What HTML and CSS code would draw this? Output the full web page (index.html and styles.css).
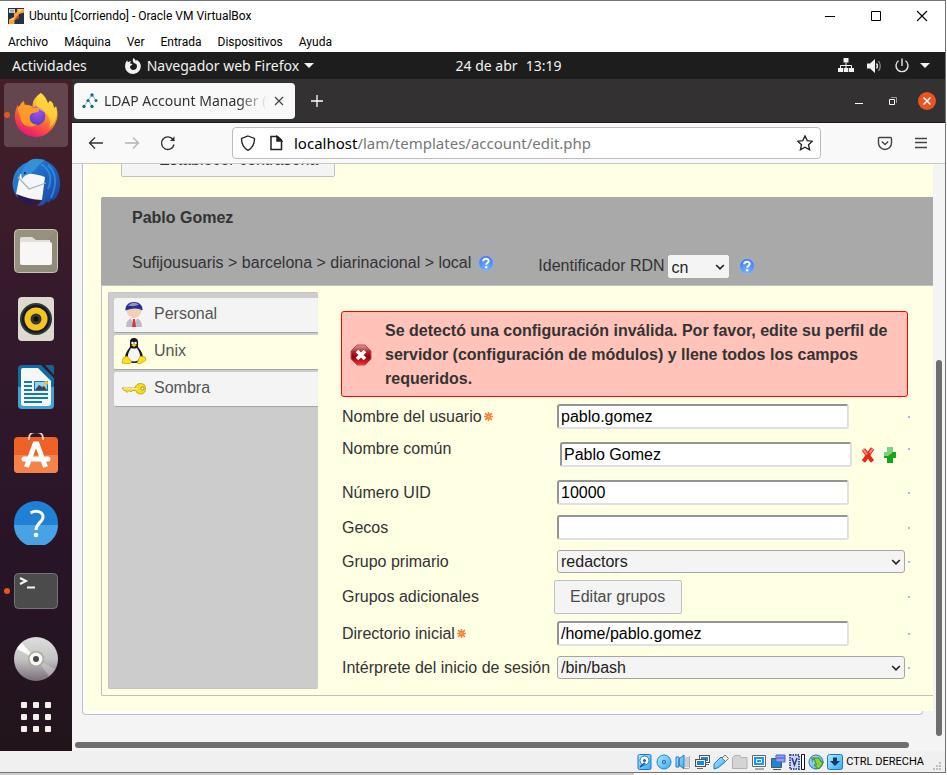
FILE: index.html
```html
<!DOCTYPE html>
<html lang="es">
<head>
<meta charset="utf-8">
<title>Ubuntu [Corriendo] - Oracle VM VirtualBox</title>
<link rel="stylesheet" href="styles.css">
</head>
<body>
<svg class="defs" aria-hidden="true">
  <defs>
    <linearGradient id="ffFlame" x1=".8" y1="0" x2=".3" y2="1"><stop offset="0" stop-color="#fff44f"/><stop offset=".35" stop-color="#ffb02e"/><stop offset=".65" stop-color="#ff5a36"/><stop offset="1" stop-color="#e5127d"/></linearGradient>
    <radialGradient id="ffGlobe" cx=".6" cy=".3" r=".8"><stop offset="0" stop-color="#a44cf5"/><stop offset="1" stop-color="#4a3fb0"/></radialGradient>
    <linearGradient id="tbBlue" x1="0" y1="0" x2="1" y2="1"><stop offset="0" stop-color="#2a90dd"/><stop offset=".5" stop-color="#1e66c2"/><stop offset="1" stop-color="#1c3f9a"/></linearGradient>
    <linearGradient id="discGrey" x1="0" y1="0" x2="0" y2="1"><stop offset="0" stop-color="#dedede"/><stop offset=".5" stop-color="#c4c4c4"/><stop offset="1" stop-color="#786e78"/></linearGradient>
    <linearGradient id="vbBlue" x1="0" y1="0" x2="1" y2="1"><stop offset="0" stop-color="#b4ecff"/><stop offset="1" stop-color="#37a8f0"/></linearGradient>
    <radialGradient id="helpBlue" cx=".5" cy=".8" r=".8"><stop offset="0" stop-color="#6cb4ff"/><stop offset="1" stop-color="#3f74ee"/></radialGradient>
    <linearGradient id="errRed" x1="0" y1="0" x2="0" y2="1"><stop offset="0" stop-color="#e0a0a0"/><stop offset=".35" stop-color="#b02028"/><stop offset=".6" stop-color="#8c0010"/><stop offset="1" stop-color="#ff3030"/></linearGradient>
    <symbol id="help" viewBox="0 0 16 16"><circle cx="8" cy="8" r="7.400" fill="url(#helpBlue)" stroke="#8fb8f8" stroke-width=".8"/><path d="M5.200 6.200C5.200 2.800 10.900 3 10.700 6c-.1 1.700-2.500 1.900-2.500 3.800" fill="none" stroke="#fff" stroke-width="2"/><circle cx="8.200" cy="12.200" r="1.200" fill="#fff"/></symbol>
    <symbol id="chevron" viewBox="0 0 10 10"><path d="M1.200 3 5 6.800 8.800 3" fill="none" stroke="#222" stroke-width="1.600"/></symbol>
    <symbol id="star" viewBox="0 0 8 8"><path d="M4 0v8M0 4h8M1 1l6 6M7 1 1 7" stroke="#ee8238" stroke-width="1.400"/><circle cx="4" cy="4" r="1" fill="#ffb070"/></symbol>
  </defs>
</svg>
<div class="window">
  <header class="titlebar">
    <svg class="i16" viewBox="0 0 16 16"><path fill="#26303f" d="M0 0h16v16H0z"/><path fill="#ddd" d="M1 1h6v4H1z"/><path d="M2 2.500h4M2 4h4" stroke="#8a98a8"/><path fill="#f7a43c" d="M9 1h7v3.500l-5 1.500v4L6.500 12v4H1v-4.500L6 9V5.500L9 4z"/><path fill="#ffd48a" d="M10 1h6l-5 3zM1 12l5-2.500v2z"/><path fill="#b8551c" d="M11 6v4l-4.500 2L8 9.500z"/></svg>
    <span class="title">Ubuntu [Corriendo] - Oracle VM VirtualBox</span>
    <button class="winbtn" aria-label="Minimizar"><svg class="i12" viewBox="0 0 12 12"><path d="M1 6.500h10" stroke="#000"/></svg></button>
    <button class="winbtn" aria-label="Maximizar"><svg class="i12" viewBox="0 0 12 12"><path d="M1.500 1.500h9v9h-9z" fill="none" stroke="#000"/></svg></button>
    <button class="winbtn" aria-label="Cerrar"><svg class="i12" viewBox="0 0 12 12"><path d="m1 1 10 10M11 1 1 11" stroke="#000" stroke-width="1.100"/></svg></button>
  </header>
  <nav class="menubar"><a href="#">Archivo</a><a href="#">Máquina</a><a href="#">Ver</a><a href="#">Entrada</a><a href="#">Dispositivos</a><a href="#">Ayuda</a></nav>

  <div class="topbar">
    <div class="top-left">
      <span class="activities">Actividades</span>
      <svg class="i16" viewBox="0 0 16 16"><path fill="#f2f2f2" d="M8.500 0C10 1 10.500 2 10.800 3c.6-.4.8-.8.9-1.300C14.500 3.400 16 6 15.800 8.600 15.500 12.800 12.200 16 8 16S.2 12.800.1 8.500C0 5.500 1 3.500 2.400 2.200c0 1 .2 1.500.6 2C4 3.300 5.200 3 6.400 3.300 5.500 4 5 4.700 5 5.500l2.500.4C7 7 5.500 7 5 8.500 5 10.500 6.400 12 8.200 12c2.200 0 3.800-1.700 3.800-3.800C12 6 10.500 5.500 9 5 7.500 4 7.500 1.500 8.500 0z"/></svg>
      <span class="app">Navegador web Firefox</span>
      <svg class="caret" viewBox="0 0 10 6"><path d="M0 0h10L5 5z" fill="#f2f2f2"/></svg>
    </div>
    <div class="clock"><span>24 de abr</span><span>13:19</span></div>
    <div class="tray">
      <svg class="i16" viewBox="0 0 16 16" fill="#f2f2f2"><path d="M5.500 0h5v4.500h-5zM0 10h5v4H0zM5.700 10h4.600v4H5.700zM11 10h5v4h-5z"/><path d="M8 4.500V10M2.500 10V7.500h11V10" fill="none" stroke="#f2f2f2"/></svg>
      <svg class="i16" viewBox="0 0 16 16"><path d="M1 5.500h3L9 1v14l-5-4.500H1z" fill="#f2f2f2"/><path d="M10.500 5.500q2 2.500 0 5" fill="none" stroke="#f2f2f2" stroke-width="1.300"/><path d="M12.500 3q3.500 5 0 10" fill="none" stroke="#888" stroke-width="1.300"/></svg>
      <svg class="i16" viewBox="0 0 16 16" fill="none" stroke="#e6e6e6" stroke-width="1.400"><path d="M4.500 2.800a6 6 0 1 0 7 0M8 .5V8"/></svg>
      <svg class="caret" viewBox="0 0 10 6"><path d="M0 0h10L5 5z" fill="#f2f2f2"/></svg>
    </div>
  </div>

  <div class="desktop">
    <aside class="dock">
      <div class="app-slot active"><i class="run"></i><svg class="i48" viewBox="0 0 48 48"><path fill="url(#ffFlame)" d="M29 1c4 3 6.500 7 7.500 11l2-3c3.500 2 4 5 4 8l2.500-2c2 6 2 11 0 16-3.500 9.500-12 16-21 16C12 47 3 38.500 2 27.500c-.5-6 1-10.500 3-14l1 3c1-3 3-5.500 5-7l.5 4c3-.5 6 0 9 1.500C20 9 24 4.500 29 1z"/><path fill="#ff9a2c" d="M5 16c3-1 5-6.500 6.500-6l1 4 7 1.500 8 4.500c-2 1-6 1-8 4-2-1-5-1-6 3-4 0-8-5-8.500-11z"/><circle cx="24" cy="25" r="9.800" fill="url(#ffGlobe)"/><path fill="#ff9a26" d="M5 19c2-3 6-5 10-4 3 1 6 1.500 9 1 3 1 4 2.500 3 4-3 2-7 .5-9 4-2 5 1 10 7 10-6 4-13 2-16-3-2-5-2-8-4-12z"/><path d="M29 1c4 3 6.500 7 7.500 11l2-3c3.500 2 4 5 4 8l2.500-2c2 10-1 17-7 23 2-10-1-16-9-19-6-3-6-10 0-18z" fill="#ffd83c" opacity=".72"/></svg></div>
      <div class="app-slot"><svg class="i50" viewBox="0 0 50 50"><path fill="url(#tbBlue)" d="M17 4c4-4 13-4 20 0 9 5 12 13 12 22 0 8-3 14-8 17l1-3-5 5-1-2-4 4-6 1c3-3 5-6 5-9L8 31l-1 9C2 34 0 26 3 18 5 11 11 6 17 4z"/><path fill="#2a1850" d="M5 35c4-2 9 1 16 4l5 6-3 2C15 47 8 43 5 35z"/><path fill="#f4f6f8" d="M9 16q12-2 25 3l-3 23C23 42 13 39 5 36z"/><path d="m7 19 11 12 17-6" fill="none" stroke="#a8afb8" stroke-width="1.200"/><path fill="#3590d8" d="M17 4c5-5 11-3 17-2-6 3-7 7-11 11-5 4-9 3-12 8-2-7 1-11 6-17z"/><path d="M30 6c9 6 12 14 7 25M37 7c9 9 9 19 3 33" stroke="#3ba1e9" stroke-width="2" fill="none" opacity=".6"/><circle cx="14" cy="15" r="1" fill="#123"/></svg></div>
      <div class="app-slot"><svg class="i44" viewBox="0 0 44 44"><rect x=".5" y=".5" width="43" height="43" rx="4" fill="#979280" stroke="#c9c5b4"/><path d="M1 43 43 1v38q0 4-4 4z" fill="#8a8573" opacity=".5"/><path fill="#e3e0d8" d="M6 10q0-2 2-2h10l4 3h14v8H6z"/><rect x="6" y="13" width="32" height="23" rx="2" fill="#f8f7f5"/></svg></div>
      <div class="app-slot"><svg class="i44" viewBox="0 0 44 44"><rect x="4" y="0" width="36" height="44" rx="4" fill="#dedad0"/><circle cx="22" cy="22" r="16" fill="#30363c"/><circle cx="22" cy="22" r="14" fill="#161b22"/><circle cx="22" cy="22" r="11.500" fill="#f6c51c"/><circle cx="22" cy="22" r="5.500" fill="#33363a"/><circle cx="22" cy="22" r="2.500" fill="#0d1115"/></svg></div>
      <div class="app-slot"><svg class="i44" viewBox="0 0 44 44"><path fill="#106da3" d="M8 0h19l13 13v27q0 4-4 4H8q-4 0-4-4V4q0-4 4-4z"/><path fill="#43a2d2" d="M4 22h36v18q0 4-4 4H8q-4 0-4-4z"/><path fill="#f5f6f6" d="M9 3h15l13 13v22q0 3-3 3H10q-3 0-3-3V5q0-2 2-2z"/><path fill="#19638f" d="M31 0h7q2 0 2 2v8z"/><path d="M10 17h8M10 21h8M10 25h8M10 29h24M10 33h24M10 37h18" stroke="#147ab4" stroke-width="2"/><path fill="#147ab4" d="M20 16h14v10H20z"/><path fill="#8dd5f5" d="M21 17h12v8H21z"/><path fill="#444" d="m21 25 4-5 3 2 2-1 3 4z"/><circle cx="32" cy="18" r="2" fill="#fbc02d"/></svg></div>
      <div class="app-slot"><svg class="i44" viewBox="0 0 44 44"><rect x="0" y="4" width="44" height="36" rx="4" fill="#ef6126"/><path fill="#f58248" d="M0 22h44v14q0 4-4 4H4q-4 0-4-4z"/><path d="M15 7V5c0-8 14-8 14 0v2" fill="none" stroke="#f8d5ab" stroke-width="2"/><path d="M12.500 34 21 11h2l8.500 23" fill="none" stroke="#fff" stroke-width="5"/><path d="M10 26h24" stroke="#fff" stroke-width="5" stroke-linecap="round"/></svg></div>
      <div class="app-slot"><svg class="i44" viewBox="0 0 44 44"><circle cx="22" cy="22" r="22" fill="#2080d4"/><path d="M0 24a22 22 0 0 0 44 0z" fill="#48a2e4"/><path d="M16.500 12c5-3 12.500-2 12.500 4 0 5-7 6-7 13" fill="none" stroke="#fff" stroke-width="3"/><circle cx="22" cy="34" r="2.300" fill="#fff"/></svg></div>
      <div class="app-slot"><i class="run"></i><svg class="i44" viewBox="0 0 44 44"><rect x=".5" y="4.500" width="43" height="35" rx="4" fill="#4b4b4b" stroke="#747474"/><path d="m6 9 6 3-6 3" fill="none" stroke="#f5f5f5" stroke-width="2"/><path d="M13 18.500h8" stroke="#f5f5f5" stroke-width="2"/></svg></div>
      <div class="app-slot"><svg class="i44" viewBox="0 0 44 44"><circle cx="22" cy="22" r="22" fill="url(#discGrey)"/><path d="M22 22 3 12Q5 8 8 6z" fill="#fff" opacity=".9"/><path d="m22 22 19 10q-3 5-6 7z" fill="#ddd" opacity=".4"/><circle cx="22" cy="22" r="8" fill="#aca699"/><circle cx="22" cy="22" r="6.500" fill="#f7f7f5"/><circle cx="22" cy="22" r="3" fill="#4a4a4a"/></svg></div>
      <div class="apps"><svg class="i30" viewBox="0 0 30 30" fill="#f2efeb"><rect width="6" height="6" rx="1"/><rect x="12" width="6" height="6" rx="1"/><rect x="24" width="6" height="6" rx="1"/><rect y="12" width="6" height="6" rx="1"/><rect x="12" y="12" width="6" height="6" rx="1"/><rect x="24" y="12" width="6" height="6" rx="1"/><rect y="24" width="6" height="6" rx="1"/><rect x="12" y="24" width="6" height="6" rx="1"/><rect x="24" y="24" width="6" height="6" rx="1"/></svg></div>
    </aside>

    <section class="browser">
      <div class="tabstrip">
        <div class="tab">
          <svg class="i16" viewBox="0 0 16 16"><path d="M10 2 6 7 2 13.500M6 7l4 6M10 2l4 5.500" fill="none" stroke="#7dbccb"/><g fill="#14707f"><circle cx="10" cy="2" r="1.700"/><circle cx="6" cy="7.500" r="1.600"/><circle cx="14" cy="7.500" r="1.500"/><circle cx="2" cy="13.500" r="1.700"/><circle cx="10" cy="13.500" r="1.700"/></g></svg>
          <span class="tab-title">LDAP Account Manager (l</span>
          <button class="bare" aria-label="Cerrar pestaña"><svg class="i10" viewBox="0 0 10 10"><path d="m1 1 8 8M9 1 1 9" stroke="#444" stroke-width="1.200"/></svg></button>
        </div>
        <button class="bare newtab" aria-label="Nueva pestaña"><svg class="i12" viewBox="0 0 12 12"><path d="M6 0v12M0 6h12" stroke="#fff" stroke-width="1.300"/></svg></button>
        <button class="bare ctl" aria-label="Minimizar"><svg class="i10" viewBox="0 0 10 10"><path d="M1 7.500h8" stroke="#fff"/></svg></button>
        <button class="bare ctl" aria-label="Restaurar"><svg class="i10" viewBox="0 0 10 10"><path d="M1.500 3.500h5v5h-5z" fill="none" stroke="#fff"/><path d="M3 1.500h5.500V7" fill="none" stroke="#999"/></svg></button>
        <button class="bare ctl" aria-label="Cerrar"><svg class="i18" viewBox="0 0 18 18"><circle cx="9" cy="9" r="9" fill="#e95420"/><path d="m5.500 5.500 7 7M12.500 5.500l-7 7" stroke="#fff" stroke-width="1.500"/></svg></button>
      </div>
      <div class="toolbar">
        <button class="bare tool" aria-label="Atrás"><svg class="i16" viewBox="0 0 16 16" fill="none" stroke="#333" stroke-width="1.300"><path d="M15 8H1.500M7 2.500 1.500 8 7 13.500"/></svg></button>
        <button class="bare tool" aria-label="Adelante"><svg class="i16" viewBox="0 0 16 16" fill="none" stroke="#b4b4b4" stroke-width="1.300"><path d="M1 8h13.500M9 2.500 14.500 8 9 13.500"/></svg></button>
        <button class="bare tool" aria-label="Recargar"><svg class="i16" viewBox="0 0 16 16" fill="none" stroke="#333" stroke-width="1.400"><path d="M14 9.500A6.300 6.300 0 1 1 13 4.500l1 1.500"/><path d="M10 6h4.500V1.300z" fill="#333" stroke="none"/></svg></button>
        <div class="urlbar">
          <svg class="i16 shield" viewBox="0 0 16 16" fill="none" stroke="#222" stroke-width="1.300"><path d="M8 1 14.500 3.500C14.500 9 12.500 13 8 15.300 3.500 13 1.500 9 1.500 3.500z"/></svg>
          <svg class="i16" viewBox="0 0 16 16" fill="none" stroke="#222" stroke-width="1.500"><path d="M3 1.500h6.500L13.500 5v9.500H3z"/><path d="M9 1.500v4.500h4.500z" fill="#222"/></svg>
          <div class="address" role="textbox" aria-label="Dirección"><b>localhost</b>/lam/templates/account/edit.php</div>
          <button class="bare" aria-label="Marcar"><svg class="i16" viewBox="0 0 16 16" fill="none" stroke="#222" stroke-width="1.300"><path d="m8 .9 2.200 4.700 5.100.6-3.800 3.500 1.100 5.100L8 12.300l-4.600 2.500 1.100-5.100L.7 6.200l5.100-.6z"/></svg></button>
        </div>
        <div class="tool-right">
          <button class="bare tool" aria-label="Pocket"><svg class="i16" viewBox="0 0 16 16" fill="none" stroke="#444" stroke-width="1.400"><path d="M2.500 2.500h11q1 0 1 1V8a6.500 6.500 0 0 1-13 0V3.500q0-1 1-1z"/><path d="M4.800 6.500 8 9.500l3.200-3"/></svg></button>
          <button class="bare tool" aria-label="Menú"><svg class="i16" viewBox="0 0 16 16" stroke="#444" stroke-width="1.300"><path d="M2 3.500h12M2 7.500h12M2 12.500h12"/></svg></button>
        </div>
      </div>

      <div class="view">
        <main class="page">
          <div class="panel"><div class="cream">
            <button class="btn password">Establecer contraseña</button>
            <div class="account">
              <div class="account-head">
                <h1>Pablo Gomez</h1>
                <div class="ident">
                  <div class="suffix"><span>Sufijousuaris &gt; barcelona &gt; diarinacional &gt; local</span><svg class="i16" role="img" aria-label="Ayuda"><use href="#help"/></svg></div>
                  <div class="rdn"><label for="rdn">Identificador RDN</label><span class="select"><select id="rdn"><option>cn</option></select><svg class="chev"><use href="#chevron"/></svg></span><svg class="i16" role="img" aria-label="Ayuda"><use href="#help"/></svg></div>
                </div>
              </div>
              <div class="account-body">
                <nav class="modules">
                  <a href="#"><svg class="i26" viewBox="0 0 26 26"><path d="M5 26q0-9 8-9t8 9z" fill="#bdbccd"/><path d="m10 17 3 8 3-8z" fill="#fff"/><path d="m12 18-1 8h4l-1-8z" fill="#d8353d"/><circle cx="13" cy="9.500" r="7.500" fill="#f5cfb5"/><path d="M4.500 9.500C4 4 8 1 13 1s9 3 8.500 8.500q-4-2.500-8.500-2t-8.500 2z" fill="#252f92"/><path d="M7 4.500q5-5 11-1-5 3-11 1z" fill="#8c94cf"/></svg>Personal</a>
                  <a href="#" class="on"><svg class="i26" viewBox="0 0 26 26"><path d="M9 4q0-4 4-4t4 4v5q5 6 5 11-3 5-9 5t-9-5q0-5 5-11z" fill="#161616"/><path d="M10 10q3 1 6 0 4 6 3 11-6 5-12 0-1-5 3-11z" fill="#f5f5f5"/><circle cx="11.500" cy="5" r="1.300" fill="#fff"/><circle cx="14.500" cy="5" r="1.300" fill="#fff"/><path d="m10 7 3-1.500L16 7l-3 2z" fill="#f5c315"/><path d="M2 20l4-2 5 6-3 2-7-1zM24 19l-5-1-3 7 3 1 6-4z" fill="#fbe217" stroke="#b98a00" stroke-width=".6"/></svg>Unix</a>
                  <a href="#"><svg class="i26" viewBox="0 0 26 26"><path d="M1 13h13q1-4.500 5.500-4.500 5 0 5 5.200t-5 5.300q-4 0-5-3.500h-3l-1.500 1.500L8 15.500l-2 2-1.500-2H3z" fill="#f5dc1e" stroke="#b89818" stroke-width=".8"/><path d="M2.500 13.800h14" stroke="#fff9b0"/><circle cx="21.500" cy="13.500" r="1.500" fill="#fff" stroke="#a78910"/></svg>Sombra</a>
                </nav>
                <form class="form">
                  <div class="error" role="alert">
                    <svg class="i22" viewBox="0 0 22 22"><path d="M7 1h8l6 6v8l-6 6H7l-6-6V7z" fill="url(#errRed)" stroke="#c84a4a"/><path d="m7 7 8 8M15 7l-8 8" stroke="#fff" stroke-width="3.800"/></svg>
                    <p>Se detectó una configuración inválida. Por favor, edite su perfil de servidor (configuración de módulos) y llene todos los campos requeridos.</p>
                  </div>
                  <div class="row"><label for="user">Nombre del usuario<svg class="req"><use href="#star"/></svg></label><input id="user" type="text" value="pablo.gomez"><i class="dot"></i></div>
                  <div class="row multi"><label for="cn">Nombre común</label><div class="values"><input id="cn" type="text" value="Pablo Gomez"><button type="button" class="bare" aria-label="Eliminar"><svg class="i16" viewBox="0 0 16 16"><path d="m3.500 2.500 9 12M12.500 1.500l-9 13" stroke="#e8261a" stroke-width="4"/><path d="m3 2 4 5.500M12.500 2 9.500 6" stroke="#f7907c" stroke-width="2"/></svg></button><button type="button" class="bare" aria-label="Añadir"><svg class="i16" viewBox="0 0 16 16"><path d="M5 0h6v5h3v6h-3v5H5v-5H2V5h3z" fill="#17a51b"/><path d="M5 0h6v5L6 9H2V5h3z" fill="#9fe39c" opacity=".75"/></svg></button></div><i class="dot"></i></div>
                  <div class="row"><label for="uid">Número UID</label><input id="uid" type="text" value="10000"><i class="dot"></i></div>
                  <div class="row"><label for="gecos">Gecos</label><input id="gecos" type="text"><i class="dot"></i></div>
                  <div class="row"><label for="group">Grupo primario</label><span class="select"><select id="group"><option>redactors</option></select><svg class="chev"><use href="#chevron"/></svg></span><i class="dot"></i></div>
                  <div class="row action"><label for="groups">Grupos adicionales</label><button id="groups" type="button" class="btn">Editar grupos</button><i class="dot"></i></div>
                  <div class="row"><label for="home">Directorio inicial<svg class="req"><use href="#star"/></svg></label><input id="home" type="text" value="/home/pablo.gomez"><i class="dot"></i></div>
                  <div class="row"><label for="shell">Intérprete del inicio de sesión</label><span class="select"><select id="shell"><option>/bin/bash</option></select><svg class="chev"><use href="#chevron"/></svg></span><i class="dot"></i></div>
                </form>
              </div>
            </div>
          </div></div>
        </main>
        <div class="vscroll"><i></i></div>
        <div class="hscroll"><i></i></div>
      </div>
    </section>
  </div>

  <footer class="statusbar">
    <svg class="i16" viewBox="0 0 16 16"><rect x="1" y=".5" width="13" height="15" rx="1.500" fill="url(#vbBlue)" stroke="#1c78c8"/><circle cx="7.500" cy="6.500" r="4.500" fill="#fff" stroke="#1c78c8"/><circle cx="7.500" cy="6.500" r="1.500" fill="#1c60b0"/><path d="m3 13 5-4" stroke="#1c60b0" stroke-width="2"/></svg>
    <svg class="i16" viewBox="0 0 16 16"><circle cx="8" cy="8" r="7" fill="url(#vbBlue)" stroke="#1c88d0"/><circle cx="8" cy="8" r="2" fill="#1769b5"/><circle cx="8" cy="8" r=".8" fill="#fff"/></svg>
    <svg class="i16" viewBox="0 0 16 16"><path d="M1 3h3v10H1zM4 5l5-4v14l-5-4z" fill="url(#vbBlue)" stroke="#1c78c8"/><path d="M10 4h5M10 6h5M10 8h5M10 10h5M10 12h5M9 14.500h5" stroke="#a8a8a8"/><path d="M14.500 2v12" stroke="#b0b0b0"/></svg>
    <svg class="i16" viewBox="0 0 16 16"><rect x="5.500" y="1.500" width="10" height="7" fill="#1787e0" stroke="#555"/><path d="M6.500 2.500h8v5h-8z" fill="none" stroke="#fff"/><rect x="1.500" y="5.500" width="10" height="7" fill="#1787e0" stroke="#555"/><path d="M2.500 6.500h8v5h-8z" fill="none" stroke="#fff"/><path d="M3 14.500h6M12 10.500h3" stroke="#666"/></svg>
    <svg class="i16" viewBox="0 0 16 16"><path d="M1 15v-5l7-7 4.500 4.500-7 6z" fill="url(#vbBlue)" stroke="#1c78c8"/><path d="m9 4 3-3 3.500 3.500-3 3z" fill="#eee" stroke="#777"/></svg>
    <svg class="i16" viewBox="0 0 16 16"><path d="M.5 3.500 3 1.500h5l1 2h6v11H.5z" fill="#d4d4d4" stroke="#b2b2b2"/></svg>
    <svg class="i16" viewBox="0 0 16 16"><path d="M1.500 1.500h13v11h-13zM4 15h9" fill="#fff" stroke="#666"/><path d="M3 3h10v8H3z" fill="#1999f0"/><path d="M5.500 5.500h5v3h-5z" fill="#1999f0" stroke="#fff"/></svg>
    <svg class="i16" viewBox="0 0 16 16"><path d="M1.500 4.500h10v9h-10zM3 15.500h8" fill="#1787e0" stroke="#555"/><path d="M6 1h9v7H6z" fill="#8ca2ef" stroke="#4b63c8"/><path d="M7 4h8" stroke="#4257bc"/></svg>
    <svg class="i16" viewBox="0 0 16 16"><path d="M1 1h9v14H1z" fill="#d0d6fa" stroke="#3950a8" stroke-width="2" stroke-dasharray="1.500 1"/><path d="m3 4 2.500 7L8 4" fill="none" stroke="#283c90" stroke-width="1.500"/><path d="M12.500.5h3v15h-3z" fill="#fff" stroke="#111"/></svg>
    <svg class="i16" viewBox="0 0 16 16"><circle cx="8" cy="8" r="7" fill="url(#vbBlue)" stroke="#2d6fb0"/><path d="M3 4q3-2 4 0L4 9z" fill="#5d9d65"/><path d="M6 4h5l2 4h2.500L11 15l-5-4h2.500z" fill="#83d538" stroke="#458b20"/></svg>
    <svg class="i16" viewBox="0 0 16 16"><rect x=".5" y=".5" width="15" height="15" rx="2" fill="url(#vbBlue)" stroke="#1c78c8"/><path d="M6 3.500h4V7h3l-5 5-5-5h3z" fill="#103a68"/></svg>
    <span class="hostkey">CTRL DERECHA</span>
    <svg class="grip" viewBox="0 0 9 9" fill="#bdbdbd"><path d="M6 0h2v2H6zM3 3h2v2H3zM6 3h2v2H6zM0 6h2v2H0zM3 6h2v2H3zM6 6h2v2H6z"/></svg>
  </footer>
</div>
<div class="under"></div>
</body>
</html>
```

FILE: styles.css
```css
* { box-sizing: border-box; }
body {
  margin: 0;
  min-height: 100vh;
  display: flex;
  flex-direction: column;
  background: #fff;
  font-family: "Liberation Sans", Arial, sans-serif;
  font-size: 16px;
}
svg { display: block; flex: none; }
button, input, select { font: inherit; margin: 0; }
a { text-decoration: none; color: inherit; }
.defs { position: absolute; width: 0; height: 0; }
.i10 { width: 10px; height: 10px; }
.i12 { width: 12px; height: 12px; }
.i16 { width: 16px; height: 16px; }
.i18 { width: 18px; height: 18px; }
.i22 { width: 22px; height: 22px; }
.i26 { width: 26px; height: 26px; }
.i30 { width: 30px; height: 30px; }
.i44 { width: 44px; height: 44px; }
.i48 { width: 46px; height: 46px; }
.i50 { width: 50px; height: 50px; }

.window {
  flex: 1;
  display: flex;
  flex-direction: column;
  margin-right: 1px;
  border: 1px solid #747474;
  border-left: 0;
}
.under { height: 2px; width: 67%; background: #ccc; }

/* Host window */
.titlebar {
  height: 30px;
  display: flex;
  align-items: center;
  padding-left: 8px;
  font-family: Roboto, sans-serif;
  font-size: 12px;
  color: #000;
}
.title { flex: 1; padding-left: 5px; }
.winbtn {
  width: 46px;
  height: 30px;
  padding: 0;
  border: 0;
  background: none;
  display: grid;
  place-items: center;
}
.menubar {
  height: 21px;
  display: flex;
  gap: 16px;
  padding-left: 8px;
  line-height: 22px;
  font-family: Roboto, sans-serif;
  font-size: 12px;
}

/* Guest top bar */
.topbar {
  height: 27px;
  display: grid;
  grid-template-columns: 72px 1fr auto 1fr;
  align-items: center;
  background: #1d1d1d;
  color: #f2f2f2;
  font-family: "Noto Sans", sans-serif;
  font-size: 14px;
}
.top-left { grid-column: 1 / 3; display: flex; align-items: center; padding-left: 12px; }
.activities { padding-right: 38px; }
.app { padding: 0 5px 0 6px; }
.caret { width: 10px; height: 6px; }
.clock { display: flex; gap: 8px; }
.tray { display: flex; align-items: center; justify-content: flex-end; gap: 12px; padding-right: 15px; }
.tray .caret { margin-left: -2px; }

.desktop { flex: 1; display: flex; min-height: 0; }
.dock {
  width: 72px;
  flex: none;
  padding-top: 2px;
  background: linear-gradient(#431f28, #33192c 38%, #281427 72%, #21151b);
}
.app-slot { position: relative; height: 68px; display: grid; place-items: center; }
.app-slot.active::before {
  content: "";
  position: absolute;
  inset: 2px 4px;
  border-radius: 4px;
  background: #ffffff2e;
}
.app-slot svg { position: relative; }
.run {
  position: absolute;
  left: 4px;
  top: 31px;
  width: 6px;
  height: 6px;
  border-radius: 50%;
  background: #e95420;
}
.apps { display: grid; place-items: center; padding-top: 9px; }

/* Browser */
.browser { flex: 1; min-width: 0; display: flex; flex-direction: column; }
.bare { padding: 0; border: 0; background: none; display: grid; place-items: center; }
.tabstrip {
  height: 44px;
  display: flex;
  align-items: center;
  padding: 0 9px 0 2px;
  background: #333132;
  border-bottom: 1px solid #1c1a1b;
  font-family: "Noto Sans", sans-serif;
  font-size: 14px;
}
.tab {
  width: 221px;
  height: 36px;
  display: flex;
  align-items: center;
  gap: 6px;
  padding: 0 11px 0 8px;
  border-radius: 4px;
  background: #f9f9fa;
  color: #333;
}
.tab-title {
  flex: 1;
  min-width: 0;
  white-space: nowrap;
  mask-image: linear-gradient(to right, #000 82%, transparent);
}
.newtab { margin: 0 auto 0 16px; }
.ctl { width: 18px; height: 18px; margin-left: 16px; }
.toolbar {
  height: 41px;
  display: flex;
  align-items: center;
  padding: 0 6px;
  background: #f9f9fa;
  border-bottom: 1px solid #c8c8c8;
}
.tool { width: 36px; height: 32px; }
.urlbar {
  flex: 1;
  height: 32px;
  display: flex;
  align-items: center;
  gap: 10px;
  margin: 0 46px;
  padding: 0 7px;
  border: 1px solid #bdbdbd;
  border-radius: 4px;
  background: #fff;
  color: #777;
  font-family: "Noto Sans", sans-serif;
  font-size: 15px;
}
.shield { margin-right: 2px; }
.address { flex: 1; min-width: 0; white-space: nowrap; overflow: hidden; }
.address b { font-weight: 400; color: #000; }
.tool-right { display: flex; }

.view {
  flex: 1;
  min-height: 0;
  display: grid;
  grid-template-columns: minmax(0, 1fr) 12px;
  grid-template-rows: minmax(0, 1fr) 12px;
  background: #f4f4f4;
}
.page { overflow: hidden; }
.vscroll { grid-column: 2; grid-row: 1; display: flex; align-items: flex-end; justify-content: center; padding-bottom: 3px; }
.vscroll i { width: 6px; height: calc(66% - 2px); border-radius: 3px; background: #6e6e6e; }
.hscroll { display: flex; align-items: center; padding: 0 24px 0 3px; }
.hscroll i { width: 100%; height: 6px; border-radius: 3px; background: #6e6e6e; }

/* Account page, scrolled so that its first button is cut by the toolbar */
.panel {
  margin: -21px 10px 0;
  padding: 0 0 3px 3px;
  border: 1px solid #c0c0c0;
  border-top: 0;
  border-radius: 0 0 4px 4px;
  background: #fff;
}
.cream { margin-right: -11px; padding: 0 0 15px 15px; background: #ffffe3; }
.btn {
  height: 34px;
  padding: 0 16px 0 15px;
  border: 1px solid #c0c0c4;
  border-radius: 2px;
  background: #f4f4f4;
  color: #4a4a4a;
  white-space: nowrap;
}
.password { display: block; width: 214px; margin: 0 0 20px 20px; padding-left: 37px; text-align: left; color: #333; }
.account { border: solid #bfbfbf; border-width: 0 0 1px 1px; border-radius: 2px 0 0 2px; }
.account-head {
  margin-left: -1px;
  padding: 9px 0 0 31px;
  height: 89px;
  border-radius: 2px 0 0 0;
  border-bottom: 1px solid #bfbfbf;
  background: #a9a9a9;
  color: #333;
}
h1 { margin: 0; font-size: 16px; line-height: 24px; }
.ident { display: flex; align-items: flex-start; gap: 44px; padding-top: 21px; line-height: 24px; }
.suffix, .rdn { display: flex; align-items: center; white-space: nowrap; }
.suffix { gap: 7px; }
.rdn { padding-top: 3px; }

.account-body { display: flex; padding: 6px 0 6px 6px; }
.modules {
  width: 210px;
  flex: none;
  display: flex;
  flex-direction: column;
  gap: 2px;
  padding: 5px 0 0 5px;
  border: 1px solid #c3c3c3;
  border-right: 0;
  border-radius: 2px;
  background: #ccc;
}
.modules a {
  height: 35px;
  display: flex;
  align-items: center;
  gap: 7px;
  padding: 0 0 2px 7px;
  border-bottom: 1px solid #a5a5a5;
  border-radius: 2px 0 0 2px;
  background: #f4f4f4;
  color: #555;
}
.modules .on { background: #ffffe3; }
.form { flex: 1; min-width: 0; margin: 0; padding: 19px 23px 5px 23px; color: #333; }
.error {
  display: flex;
  align-items: center;
  gap: 13px;
  margin: 0 2px 2px 0;
  padding: 7px 8px 5px;
  border: 1px solid #f00;
  border-radius: 3px;
  background: #ffc3b9;
  font-weight: 700;
  line-height: 24px;
}
.error p { margin: 0; }
.row {
  display: grid;
  grid-template-columns: 215px minmax(0, 1fr) 2px;
  column-gap: 3px;
  align-items: center;
  padding: 5px 0;
}
.row label { display: flex; align-items: center; gap: 2px; white-space: nowrap; margin-right: -3px; padding-left: 1px; }
.req { width: 9px; height: 9px; }
.row input {
  width: 292px;
  height: 25px;
  margin-left: -2px;
  padding: 0 2px;
  border: 2px solid #e0e0e4;
  border-top-color: #949494;
  border-left-color: #949494;
  border-radius: 3px;
  background: #fff;
  color: #000;
}
.dot { width: 2px; height: 2px; background: #9dbdec; }
.multi { padding: 3px 0 8px; align-items: start; line-height: 24px; }
.multi .dot { margin-top: 11px; }
.values { display: flex; align-items: center; gap: 6px; padding: 5px 0 0 3px; }
.values input { margin-right: 2px; }
.action { padding: 2px 0; }
.action .btn { justify-self: start; margin-left: -5px; }
.select { position: relative; display: block; margin-left: -2px; }
.rdn .select { width: 61px; margin: 0 10px 0 3px; }
.select select {
  display: block;
  appearance: none;
  width: 100%;
  height: 23px;
  padding: 0 20px 0 3px;
  border: 1px solid #a5a5a8;
  border-radius: 3px;
  background: #f4f4f4;
  color: #222;
}
.rdn select { border-color: #f4f4f4; border-radius: 2px; }
.chev { position: absolute; right: 4px; top: 7px; width: 10px; height: 10px; pointer-events: none; }

/* Host status bar */
.statusbar {
  height: 21px;
  display: flex;
  align-items: center;
  justify-content: flex-end;
  gap: 3px;
  padding-right: 3px;
  background: #f0f0f0;
  font-family: Roboto, sans-serif;
  font-size: 11px;
  color: #000;
}
.hostkey { min-width: 75px; }
.grip { width: 9px; height: 9px; align-self: flex-end; margin: 0 0 1px 6px; }
```
